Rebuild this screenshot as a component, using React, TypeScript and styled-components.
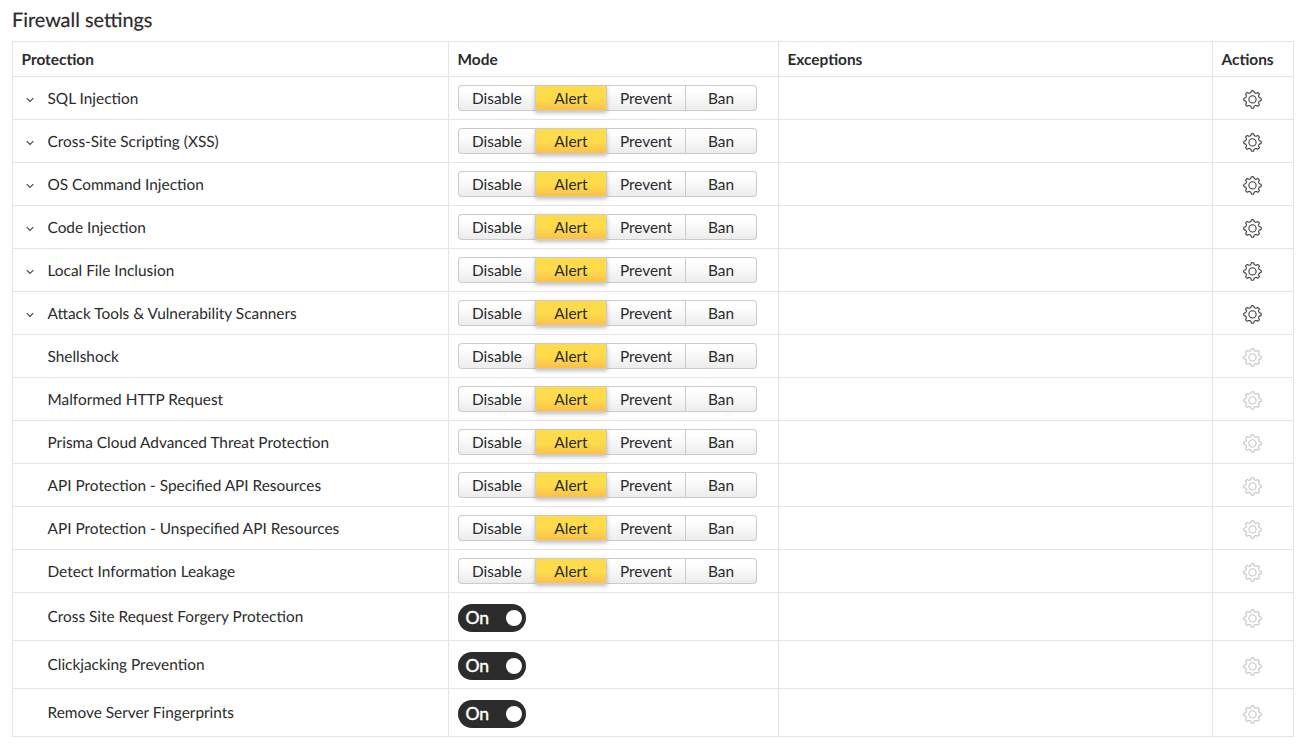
import React from 'react';
import styled, { createGlobalStyle, css } from 'styled-components';

const GlobalStyle = createGlobalStyle`
  *, *::before, *::after { box-sizing: border-box; }
  body {
    margin: 0;
    background: #fff;
    color: #2b2b2b;
    font-family: Lato, "Liberation Sans", sans-serif;
    font-size: 15.4px;
    text-rendering: geometricPrecision;
  }
`;

const line = '#e4e4e4';

const Page = styled.main`
  padding: 0 11px 10px 12px;
`;

const Title = styled.h1`
  margin: 0;
  height: 41px;
  padding-top: 1px;
  font-size: 19.85px;
  font-weight: 400;
  line-height: 38px;
  -webkit-text-stroke: 0.2px currentColor;
`;

const Table = styled.div`
  display: flex;
  flex-direction: column;
  border: 1px solid ${line};
`;

const Row = styled.div<{ $height: number }>`
  display: grid;
  grid-template-columns: 435px 330px 434px 1fr;
  height: ${(p) => p.$height}px;
  & + & { border-top: 1px solid ${line}; }
`;

const Cell = styled.div<{ $lift?: boolean }>`
  display: flex;
  align-items: center;
  padding-left: 9px;
  ${(p) => p.$lift && css`padding-bottom: 2px;`}
  & + & { border-left: 1px solid ${line}; }
`;

const ActionCell = styled(Cell)<{ $drop: number }>`
  justify-content: center;
  padding: ${(p) => p.$drop}px 2px 0 0;
`;

const HeadCell = styled(Cell)`
  padding: 2px 0 0 8.5px;
  font-weight: 700;
`;

const Expander = styled.span`
  display: flex;
  width: 25.5px;
  padding: 3px 0 0 4px;
`;

const Name = styled.span`
  padding-top: 2px;
  white-space: nowrap;
`;

const Segments = styled.div`
  display: grid;
  grid-template-columns: 77px 72px 79px 71px;
  height: 26px;
  border-radius: 4px;
`;

const Segment = styled.button<{ $active?: boolean }>`
  padding: 0;
  border: 1px solid #cbcbcb;
  border-left-width: 0;
  background: linear-gradient(#fff 20%, #ececec);
  color: inherit;
  font: inherit;
  line-height: 24px;
  text-align: center;
  &:first-child { border-left-width: 1px; border-right-width: 0; border-radius: 4px 0 0 4px; }
  &:last-child { border-radius: 0 4px 4px 0; }
  ${(p) => p.$active && css`
    position: relative;
    border-left-width: 1px;
    background: linear-gradient(#fddb4b 55%, #fdbf4b);
    box-shadow: 0 2px 4px rgba(0, 0, 0, 0.25);
  `}
`;

const Switch = styled.button`
  display: flex;
  align-items: center;
  justify-content: space-between;
  width: 68px;
  height: 28px;
  margin-top: 2px;
  padding: 0 4px 0 7.4px;
  border: 0;
  border-radius: 14px;
  background: #2c2c2c;
  color: #fff;
  font: 400 17.6px/26px Lato, sans-serif;
  -webkit-text-stroke: 0.4px currentColor;
`;

const SwitchLabel = styled.span`
  padding-top: 1px;
`;

const Knob = styled.span`
  width: 16px;
  height: 16px;
  border-radius: 50%;
  background: #fff;
`;

const gearPath = (() => {
  const at = (r: number, deg: number) => {
    const a = ((deg - 90) * Math.PI) / 180;
    return `${(10 + r * Math.cos(a)).toFixed(2)} ${(10 + r * Math.sin(a)).toFixed(2)}`;
  };
  let d = '';
  for (let i = 0; i < 8; i++) {
    const c = i * 45;
    d += `${i ? 'L' : 'M'}${at(7.2, c - 13)}L${at(8.6, c - 8)}Q${at(9.1, c)} ${at(8.6, c + 8)}L${at(7.2, c + 13)}Q${at(6.4, c + 22.5)} ${at(7.2, c + 32)}`;
  }
  return d + 'Z';
})();

const GearIcon = styled.svg`
  overflow: visible;
`;

const Gear = ({ muted }: { muted?: boolean }) => (
  <GearIcon width="20" height="20" viewBox="-0.5 -0.4 20 20" fill="none" stroke={muted ? '#c4c4c4' : '#3c3c3c'} strokeWidth="1.1" strokeLinejoin="round">
    <path d={gearPath} />
    <circle cx="10" cy="10" r="3.6" />
  </GearIcon>
);

const Chevron = () => (
  <svg width="9" height="6" viewBox="0.5 0 9 6" fill="none" stroke="#444" strokeWidth="1.1">
    <path d="M1.2 1.2 4.5 4.4 7.8 1.2" />
  </svg>
);

const modes = ['Disable', 'Alert', 'Prevent', 'Ban'];

const expandable = [
  'SQL Injection',
  'Cross-Site Scripting (XSS)',
  'OS Command Injection',
  'Code Injection',
  'Local File Inclusion',
  'Attack Tools & Vulnerability Scanners',
];
const plain = [
  'Shellshock',
  'Malformed HTTP Request',
  'Prisma Cloud Advanced Threat Protection',
  'API Protection - Specified API Resources',
  'API Protection - Unspecified API Resources',
  'Detect Information Leakage',
];
const switches = ['Cross Site Request Forgery Protection', 'Clickjacking Prevention', 'Remove Server Fingerprints'];

type ProtectionProps = { name: string; open?: boolean; toggle?: boolean };

const ProtectionRow = ({ name, open, toggle }: ProtectionProps) => (
  <Row $height={toggle ? 48 : 43}>
    <Cell $lift={toggle}>
      <Expander>{open && <Chevron />}</Expander>
      <Name>{name}</Name>
    </Cell>
    <Cell>
      {toggle ? (
        <Switch><SwitchLabel>On</SwitchLabel><Knob /></Switch>
      ) : (
        <Segments>
          {modes.map((m) => <Segment key={m} $active={m === 'Alert'}>{m}</Segment>)}
        </Segments>
      )}
    </Cell>
    <Cell />
    <ActionCell $drop={toggle ? 3 : 2}><Gear muted={!open} /></ActionCell>
  </Row>
);

export default function App() {
  return (
    <>
      <GlobalStyle />
      <Page>
        <Title>Firewall settings</Title>
        <Table>
          <Row $height={34}>
            <HeadCell>Protection</HeadCell>
            <HeadCell>Mode</HeadCell>
            <HeadCell>Exceptions</HeadCell>
            <HeadCell>Actions</HeadCell>
          </Row>
          {expandable.map((n) => <ProtectionRow key={n} name={n} open />)}
          {plain.map((n) => <ProtectionRow key={n} name={n} />)}
          {switches.map((n) => <ProtectionRow key={n} name={n} toggle />)}
        </Table>
      </Page>
    </>
  );
}
